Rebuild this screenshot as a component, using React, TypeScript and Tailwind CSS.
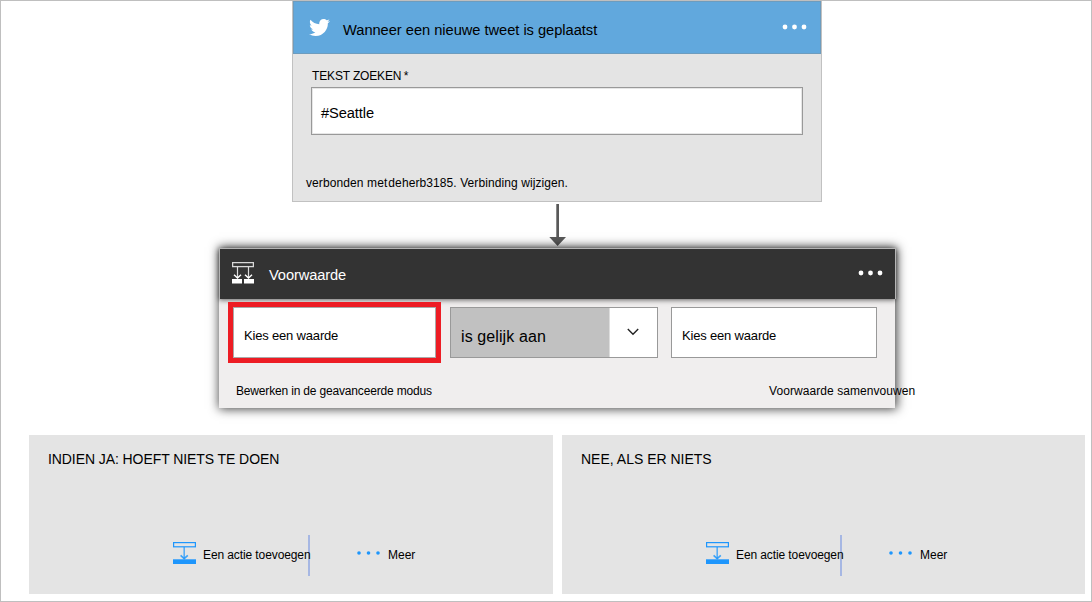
import React from "react";
import { FaTwitter } from "react-icons/fa";

function Dots({ className, r, gap }: { className: string; r: number; gap: number }) {
  return (
    <svg className={className} width="26" height="6" viewBox="0 0 26 6" fill="currentColor">
      <circle cx="3" cy="3" r={r} />
      <circle cx={3 + gap} cy="3" r={r} />
      <circle cx={3 + gap * 2} cy="3" r={r} />
    </svg>
  );
}

function ConditionIcon() {
  return (
    <svg className="mt-[13px] ml-3 shrink-0" width="22" height="22" viewBox="0 0 22 22" fill="none" stroke="#fff">
      <rect x="0.6" y="0.6" width="20.8" height="4" stroke="#d8d8d8" strokeWidth="1.3" />
      <path d="M5.5 5V16M16.5 5V16" stroke="#ddd" strokeWidth="1.2" />
      <path d="M2 12.8L5.5 16L9 12.8M13 12.8L16.5 16L20 12.8" strokeWidth="1.4" />
      <path d="M0 17H10V21.5H0ZM12 17H22V21.5H12Z" fill="#fff" stroke="none" />
    </svg>
  );
}

function AddActionIcon() {
  return (
    <svg className="mt-[7px] w-[23px] shrink-0" width="23" height="22" viewBox="0 0 23 22" fill="none" stroke="#1e96fc">
      <rect x="0.6" y="0.6" width="21.8" height="4.2" strokeWidth="1.2" />
      <path d="M11.2 5V17" strokeWidth="1.6" strokeOpacity="0.7" />
      <path d="M7.6 13.3L11.2 16.7L14.8 13.3" strokeWidth="1.6" strokeOpacity="0.85" />
      <rect x="0" y="17.3" width="23" height="4.7" fill="#1e96fc" stroke="none" />
    </svg>
  );
}

function Branch({ title, className, actionClass }: { title: string; className: string; actionClass: string }) {
  return (
    <section className={`flex h-[159px] flex-col bg-[#e4e4e4] ${className}`}>
      <h2 className="mt-[14px] ml-[19px] text-[14px] leading-5">{title}</h2>
      <div className="mt-[66px] flex h-[41px] text-[12px] leading-5">
        <div className={`relative z-10 flex shrink-0 pl-[144px] ${actionClass}`}>
          <AddActionIcon />
          <span className="mt-[10px] ml-[7px] tracking-[-0.1px]">Een actie toevoegen</span>
        </div>
        <div className="w-[2px] shrink-0 bg-[#a6b7e3]" />
        <Dots className="mt-[15px] ml-[46px] shrink-0 text-[#1e96fc]" r={1.8} gap={9.5} />
        <span className="mt-[10px] ml-[6px]">Meer</span>
      </div>
    </section>
  );
}

export default function App() {
  return (
    <main className="flex h-[602px] w-[1092px] flex-col overflow-hidden border border-[#bfbfbf] bg-white font-['Liberation_Sans',Arial,sans-serif] whitespace-nowrap text-black">
      <section className="ml-[291px] flex h-[201px] w-[530px] shrink-0 flex-col border border-t-0 border-[#c1c1c1] bg-[#e4e4e4]">
        <header className="flex h-[53px] border border-[#6d9cbe] bg-[#61a8dd]">
          <FaTwitter className="mt-[15px] ml-[15px] text-white" size={21} />
          <h1 className="mt-[18px] ml-[13px] text-[14.67px] leading-5 tracking-[-0.03px]">
            Wanneer een nieuwe tweet is geplaatst
          </h1>
          <Dots className="mt-[22px] mr-[12px] ml-auto text-white" r={2.4} gap={9.5} />
        </header>
        <div className="mt-3 ml-[19px] flex text-[12px] leading-5">
          <span className="tracking-[-0.15px]">TEKST ZOEKEN</span>
          <span className="ml-[2.5px]">*</span>
        </div>
        <div className="mt-[1px] ml-[18px] h-12 w-[492px] border border-[#999] bg-white pt-[15px] pl-[9px] text-[14.67px] leading-5 shadow-[inset_0_0_0_1px_#e6e6e6] tracking-[-0.1px]">
          #Seattle
        </div>
        <div className="mt-[38px] ml-[13px] flex text-[12px] leading-5">
          <span className="tracking-[0.1px]">verbonden met</span>
          <span className="ml-[1px] tracking-[0.09px]">deherb3185. Verbinding wijzigen.</span>
        </div>
      </section>

      <svg className="mt-[2px] ml-[548px] shrink-0" width="17" height="42" viewBox="0 0 17 42" fill="#595959">
        <path d="M7.3 0H10V33H17L8.6 42L0.3 33H7.3Z" />
      </svg>

      <section className="mt-[2px] ml-[218px] h-[160px] w-[676px] shrink-0 bg-[#f0eeee] shadow-[1px_0_10px_1px_rgba(0,0,0,0.75)]">
        <header className="relative flex h-[51px] w-[677px] border border-b-0 border-[#b5b5b5] bg-[#333] text-white shadow-[0_1px_5px_rgba(0,0,0,0.6)]">
          <ConditionIcon />
          <h2 className="mt-4 ml-[15px] text-[14.67px] leading-5 tracking-[-0.12px]">Voorwaarde</h2>
          <Dots className="mt-[21px] mr-[11.5px] ml-auto text-white" r={2.4} gap={9.5} />
        </header>
        <div className="relative ml-[9px] flex pt-[3px] text-[13px] leading-5 tracking-[-0.18px]">
          <div className="h-[61px] w-[213px] border-[5px] border-[#ed1c24]">
            <div className="h-[51px] border border-[#aaa] bg-white pt-[18px] pl-[10px]">Kies een waarde</div>
          </div>
          <div className="mt-[5px] ml-[9px] flex h-[51px] w-[208px] border border-[#999] bg-white">
            <div className="w-[159px] border-r border-[#ddd] bg-[#c1c1c1] pt-[19px] pl-[10px] text-[16px] leading-5 tracking-[0.1px]">
              is gelijk aan
            </div>
            <svg className="mt-[20px] ml-[17px]" width="12" height="8" viewBox="0 0 12 8" fill="none" stroke="#222" strokeWidth="1.4">
              <path d="M0.8 1L6 6.2L11.2 1" />
            </svg>
          </div>
          <div className="mt-[5px] ml-[13px] h-[51px] w-[206px] border border-[#999] bg-white pt-[18px] pl-[10px]">
            Kies een waarde
          </div>
        </div>
        <div className="relative mt-[18px] flex pl-[17px] text-[12px] leading-5">
          <span className="w-[533px] shrink-0 tracking-[-0.17px]">Bewerken in de geavanceerde modus</span>
          <span className="shrink-0 tracking-[0.07px]">Voorwaarde samenvouwen</span>
        </div>
      </section>

      <div className="mt-[27px] ml-7 flex gap-[9px]">
        <Branch
          title="INDIEN JA: HOEFT NIETS TE DOEN"
          className="w-[524px] [&_h2]:tracking-[-0.08px]"
          actionClass="w-[279px]"
        />
        <Branch title="NEE, ALS ER NIETS" className="w-[523px]" actionClass="w-[278px]" />
      </div>
    </main>
  );
}
